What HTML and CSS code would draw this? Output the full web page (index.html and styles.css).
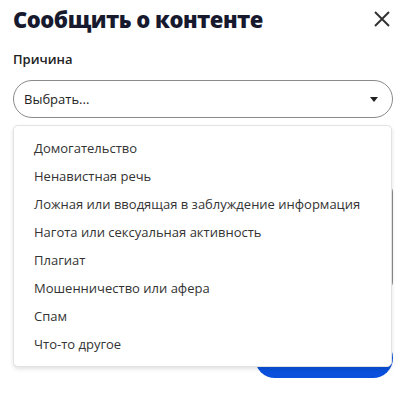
FILE: index.html
```html
<!DOCTYPE html>
<html>
<head>
  <link rel="stylesheet" href="styles.css">
</head>
<body>
  <div id="reportDialog">
    <div class="dialog-header">
      <div class="dialog-title">Сообщить о контенте</div>
      <button class="close-button" aria-label="Закрыть">
        <svg width="18" height="18" viewBox="0 0 18 18"><path d="M2 2 L16 16 M16 2 L2 16" stroke="#333" stroke-width="2" fill="none"/></svg>
      </button>
    </div>

    <div class="field">
      <label class="field-label">Причина</label>
      <div class="select-wrap">
        <div class="select-box">
          <span>Выбрать...</span>
          <svg class="caret" width="8" height="5" viewBox="0 0 8 5"><path d="M0 0 H8 L4 5 Z" fill="#222"/></svg>
        </div>
        <ul class="select-menu">
          <li>Домогательство</li>
          <li>Ненавистная речь</li>
          <li>Ложная или вводящая в заблуждение информация</li>
          <li>Нагота или сексуальная активность</li>
          <li>Плагиат</li>
          <li>Мошенничество или афера</li>
          <li>Спам</li>
          <li>Что-то другое</li>
        </ul>
      </div>
    </div>

    <!-- details field sits under the open menu -->
    <div class="field details-field">
      <span class="label-stub"></span>
      <textarea class="details"></textarea>
    </div>

    <div class="actions">
      <button class="submit-button"></button>
    </div>
  </div>
</body>
</html>
```

FILE: styles.css
```css
body {
  margin: 0;
  background-color: #ffffff;
  font-family: "Open Sans", "Noto Sans", sans-serif;
  color: #1c1f2b;
}
#reportDialog {
  padding: 4px 13px 13px 13px;
}
.dialog-header {
  display: flex;
  justify-content: space-between;
  align-items: center;
  height: 30px;
}
.dialog-title {
  font-size: 22px;
  font-weight: 800;
  color: #171a2e;
  letter-spacing: -0.5px;
}
.close-button {
  background: none;
  border: none;
  padding: 0;
  margin-right: 2px;
  width: 18px;
  height: 18px;
}
.field {
  margin-top: 16px;
}
.field-label {
  display: block;
  font-size: 13px;
  font-weight: 600;
  color: #222;
  margin-bottom: 12px;
}
.select-wrap {
  position: relative;
}
.select-box {
  display: flex;
  justify-content: space-between;
  align-items: center;
  height: 36px;
  padding: 0 14px 0 10px;
  border: 1px solid #8a8a8a;
  border-radius: 19px;
  font-size: 13px;
  color: #222;
}
.select-menu {
  position: absolute;
  top: 45px;
  left: 0;
  width: 377px;
  margin: 0;
  padding: 8px 0;
  list-style: none;
  background-color: #ffffff;
  border: 1px solid #e2e2e2;
  border-radius: 5px;
  box-shadow: 0px 2px 4px rgba(0, 0, 0, 0.12);
  z-index: 2;
}
.select-menu li {
  height: 28px;
  line-height: 28px;
  padding-left: 20px;
  font-size: 13px;
  color: #333;
}
.details-field {
  display: flex;
  flex-direction: column;
}
.label-stub {
  display: block;
  width: 2px;
  height: 2px;
  margin: 5px 0 43px 0;
  background-color: #333;
}
.details {
  display: block;
  width: 100%;
  height: 106px;
  box-sizing: border-box;
  border: 1px solid #8a8a8a;
  border-radius: 8px;
  resize: none;
}
.actions {
  display: flex;
  justify-content: flex-end;
  margin-top: 48px;
}
.submit-button {
  width: 138px;
  height: 40px;
  background-color: #0a50dc;
  color: white;
  border: none;
  border-radius: 20px;
  font-size: 14px;
  font-weight: bold;
}
```
